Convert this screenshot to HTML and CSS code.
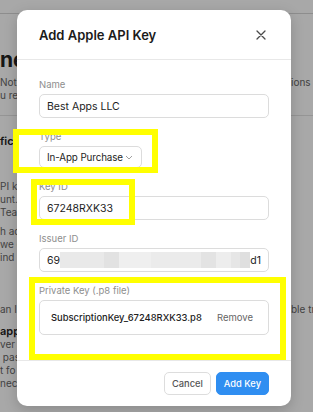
FILE: index.html
```html
<!DOCTYPE html>
<html lang="en">
<head>
  <meta charset="UTF-8" />
  <meta name="viewport" content="width=device-width, initial-scale=1.0"/>
  <title>Add Apple API Key</title>
  <link rel="stylesheet" href="styles.css">
</head>

<body>
  <!-- page behind the dialog -->
  <div class="page">
    <div class="topbar"></div>

    <div class="hero">
      <div class="strip strip-left">
        <div class="big">ne</div>
        <p>Noti</p>
        <p>u rea</p>
      </div>
      <div class="strip strip-right">
        <p>ions</p>
      </div>
    </div>

    <div class="section">
      <div class="strip strip-left">
        <div class="sub">fica</div>
        <div class="para para-a">
          <p>PI ke</p>
          <p>unt.</p>
          <p>Tear</p>
        </div>
        <div class="para para-b">
          <p>h ac</p>
          <p>we c</p>
          <p>ind</p>
        </div>
        <p class="para-c">an I</p>
        <div class="sub sub-app">app</div>
        <div class="para">
          <p>ver</p>
          <p>&nbsp;pas</p>
          <p>t fo</p>
          <p>nect</p>
        </div>
      </div>
      <div class="strip strip-right">
        <p class="para-c">ble tr</p>
      </div>
    </div>
  </div>

  <div class="overlay"></div>

  <div class="modal">
    <div class="modal-head">
      <h2>Add Apple API Key</h2>
      <button class="close" aria-label="Close">
        <svg width="10" height="10" viewBox="0 0 10 10">
          <path d="M1 1 L9 9 M9 1 L1 9" stroke="#4a4a4a" stroke-width="1.3" stroke-linecap="round" fill="none"/>
        </svg>
      </button>
    </div>

    <div class="modal-body">
      <div class="field">
        <label>Name</label>
        <div class="input">Best Apps LLC</div>
      </div>

      <div class="field">
        <label>Type</label>
        <div class="input select">
          <span>In-App Purchase</span>
          <svg width="8" height="5" viewBox="0 0 8 5">
            <path d="M1 1 L4 4 L7 1" stroke="#a0a0a0" stroke-width="1" fill="none"/>
          </svg>
        </div>
      </div>

      <div class="field">
        <label>Key ID</label>
        <div class="input">67248RXK33</div>
      </div>

      <div class="field">
        <label>Issuer ID</label>
        <div class="input">69<span class="redacted"></span>d1</div>
      </div>

      <div class="field">
        <label>Private Key (.p8 file)</label>
        <div class="input file">
          <span class="file-name">SubscriptionKey_67248RXK33.p8</span>
          <span class="remove">Remove</span>
        </div>
      </div>
    </div>

    <div class="modal-foot">
      <button class="btn">Cancel</button>
      <button class="btn primary">Add Key</button>
    </div>
  </div>

  <!-- yellow highlight marks drawn on top of the screenshot -->
  <div class="mark mark-type"></div>
  <div class="mark mark-key"></div>
  <div class="mark mark-file"></div>
</body>
</html>
```

FILE: styles.css
```css
* {
  box-sizing: border-box;
}

body {
  margin: 0;
  width: 313px;
  height: 412px;
  overflow: hidden;
  position: relative;
  background-color: #ffffff;
  font-family: 'Inter', 'Liberation Sans', sans-serif;
  color: #1d1d1d;
}

p {
  margin: 0;
}

/* background page */
.topbar {
  height: 14px;
  border-bottom: 1px solid #d6d6d6;
}

.hero,
.section {
  display: flex;
  justify-content: space-between;
}

.hero {
  height: 102px;
  border-bottom: 1px solid #e2e2e2;
}

.strip {
  white-space: nowrap;
  font-size: 10px;
  line-height: 13px;
  color: #666666;
}

.strip-left {
  width: 40px;
}

.strip-right {
  width: 22px;
}

.hero .strip {
  padding-top: 34px;
}

.hero .strip-right {
  padding-top: 62px;
}

.big {
  font-size: 21px;
  line-height: 24px;
  font-weight: 700;
  color: #222222;
  margin-bottom: 4px;
}

.section .strip-left {
  padding-top: 18px;
}

.sub {
  font-size: 11px;
  line-height: 14px;
  font-weight: 600;
  color: #222222;
}

.para-a {
  margin-top: 32px;
}

.para-b {
  margin-top: 6px;
}

.para-c {
  margin-top: 39px;
}

.sub-app {
  margin-top: 9px;
  line-height: 13px;
}

.section .strip-right {
  padding-top: 148px;
}

.overlay {
  position: absolute;
  inset: 0;
  background-color: rgba(0, 0, 0, 0.34);
}

/* dialog */
.modal {
  position: absolute;
  left: 17px;
  top: 10px;
  width: 274px;
  height: 396px;
  background-color: #ffffff;
  border-radius: 10px;
  box-shadow: 0 4px 14px rgba(0, 0, 0, 0.18);
  display: flex;
  flex-direction: column;
}

.modal-head {
  height: 50px;
  padding: 0 25px 0 22px;
  display: flex;
  align-items: center;
  justify-content: space-between;
  border-bottom: 1px solid #e8e8e8;
}

.modal-head h2 {
  margin: 0;
  font-size: 13px;
  font-weight: 600;
  color: #1b1b1b;
}

.close {
  border: none;
  background: none;
  padding: 0;
  width: 10px;
  height: 10px;
  display: flex;
}

.modal-body {
  flex: 1;
  padding: 19px 22px 0 22px;
  display: flex;
  flex-direction: column;
  gap: 13px;
}

.field label {
  display: block;
  font-size: 9.5px;
  line-height: 12px;
  color: #8e8e8e;
  margin-bottom: 3px;
}

.input {
  height: 24px;
  border: 1px solid #dcdcdc;
  border-radius: 5px;
  padding: 0 7px;
  font-size: 10.5px;
  white-space: nowrap;
  display: flex;
  align-items: center;
  color: #1d1d1d;
}

.select {
  width: 103px;
  height: 22px;
  justify-content: space-between;
  padding-right: 8px;
  font-size: 9.8px;
  letter-spacing: -0.1px;
}

.redacted {
  display: inline-block;
  width: 192px;
  height: 16px;
  background: linear-gradient(to right,
    #e9e9e9 0, #e9e9e9 23%,
    #e2e2e2 23%, #e2e2e2 31%,
    #efefef 31%, #efefef 48%,
    #ebebeb 48%, #ebebeb 74%,
    #e3e3e3 74%, #e3e3e3 82%,
    #ededed 82%, #ededed 90%,
    #e6e6e6 90%, #e6e6e6 95%,
    #dfdfdf 95%);
}

.file {
  height: 35px;
  padding: 0 15px 0 11px;
  justify-content: space-between;
}

.file-name {
  font-size: 9.4px;
  font-weight: 500;
  color: #222222;
}

.remove {
  font-size: 9.5px;
  color: #666666;
}

.modal-foot {
  height: 46px;
  border-top: 1px solid #e8e8e8;
  padding: 0 22px;
  display: flex;
  align-items: center;
  justify-content: flex-end;
  gap: 5px;
}

.btn {
  height: 23px;
  padding: 0 7px;
  border: 1px solid #dddddd;
  border-radius: 5px;
  background-color: #ffffff;
  font-family: inherit;
  font-size: 9.3px;
  font-weight: 500;
  color: #555555;
}

.btn.primary {
  background-color: #2f8ef1;
  border-color: #2f8ef1;
  color: #ffffff;
}

/* highlight marks */
.mark {
  position: absolute;
  border: 6px solid #ffff00;
}

.mark-type {
  left: 13px;
  top: 129px;
  width: 145px;
  height: 44px;
}

.mark-key {
  left: 31px;
  top: 179px;
  width: 104px;
  height: 46px;
}

.mark-file {
  left: 29px;
  top: 277px;
  width: 257px;
  height: 83px;
}
```
